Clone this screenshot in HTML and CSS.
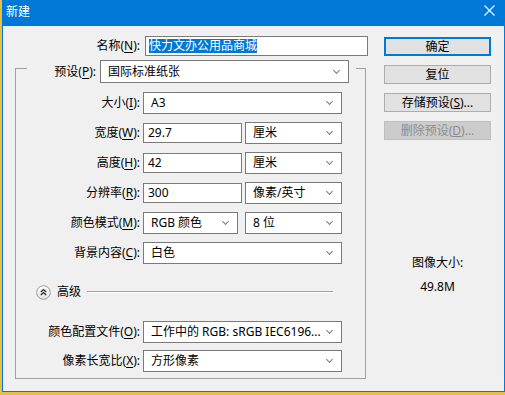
FILE: index.html
```html
<!DOCTYPE html>
<html lang="zh-CN">
<head>
    <meta charset="UTF-8">
    <title>新建</title>
    <link rel="stylesheet" href="styles.css">
</head>
<body>

    <div class="window">
        <div class="titlebar">
            <span class="title">新建</span>
            <svg class="close" width="11" height="11" viewBox="0 0 11 11">
                <path d="M0.5 0.5 L10.5 10.5 M10.5 0.5 L0.5 10.5" stroke="#fff" stroke-width="1.1" fill="none"/>
            </svg>
        </div>

        <div class="content">
            <div class="form">
                <div class="name-row">
                    <label class="lbl name-lbl">名称(<u>N</u>):</label>
                    <div class="field name-field"><span class="sel">快力文办公用品商城</span></div>
                </div>

                <div class="group">
                    <div class="group-head">
                        <div class="edge edge-l"></div>
                        <label class="lbl head-lbl">预设(<u>P</u>):</label>
                        <div class="field select preset">国际标准纸张<i class="chev"></i></div>
                        <div class="edge edge-r"></div>
                    </div>

                    <div class="group-body">
                        <div class="rows">
                            <label class="lbl">大小(<u>I</u>):</label>
                            <div class="cells">
                                <div class="field select w-full">A3<i class="chev"></i></div>
                            </div>

                            <label class="lbl">宽度(<u>W</u>):</label>
                            <div class="cells">
                                <div class="field input">29.7</div>
                                <div class="field select w-unit">厘米<i class="chev"></i></div>
                            </div>

                            <label class="lbl">高度(<u>H</u>):</label>
                            <div class="cells">
                                <div class="field input">42</div>
                                <div class="field select w-unit">厘米<i class="chev"></i></div>
                            </div>

                            <label class="lbl">分辨率(<u>R</u>):</label>
                            <div class="cells">
                                <div class="field input">300</div>
                                <div class="field select w-unit">像素/英寸<i class="chev"></i></div>
                            </div>

                            <label class="lbl">颜色模式(<u>M</u>):</label>
                            <div class="cells">
                                <div class="field select w-mode">RGB 颜色<i class="chev"></i></div>
                                <div class="field select w-bits">8 位<i class="chev"></i></div>
                            </div>

                            <label class="lbl">背景内容(<u>C</u>):</label>
                            <div class="cells">
                                <div class="field select w-full">白色<i class="chev"></i></div>
                            </div>
                        </div>

                        <div class="advanced">
                            <svg class="adv-icon" width="15" height="15" viewBox="0 0 15 15">
                                <defs>
                                    <linearGradient id="g" x1="0" y1="0" x2="0" y2="1">
                                        <stop offset="0" stop-color="#ffffff"/>
                                        <stop offset="1" stop-color="#e2e2e2"/>
                                    </linearGradient>
                                </defs>
                                <circle cx="7.5" cy="7.5" r="6.8" fill="url(#g)" stroke="#9a9a9a"/>
                                <path d="M4.8 7 L7.5 4.5 L10.2 7 M4.8 10 L7.5 7.5 L10.2 10" stroke="#222" stroke-width="1.2" fill="none"/>
                            </svg>
                            <span class="adv-text">高级</span>
                            <div class="adv-line"></div>
                        </div>

                        <div class="rows rows-adv">
                            <label class="lbl">颜色配置文件(<u>O</u>):</label>
                            <div class="cells">
                                <div class="field select w-full">工作中的 RGB: sRGB IEC6196...<i class="chev"></i></div>
                            </div>

                            <label class="lbl">像素长宽比(<u>X</u>):</label>
                            <div class="cells">
                                <div class="field select w-full">方形像素<i class="chev"></i></div>
                            </div>
                        </div>
                    </div>
                </div>
            </div>

            <div class="side">
                <button class="btn btn-default">确定</button>
                <button class="btn">复位</button>
                <button class="btn">存储预设(<u>S</u>)...</button>
                <button class="btn" disabled>删除预设(<u>D</u>)...</button>

                <div class="size-label">图像大小:</div>
                <div class="size-value">49.8M</div>
            </div>
        </div>
    </div>

</body>
</html>
```

FILE: styles.css
```css
body {
    margin: 0;
    background: #e8bf45;
    font-family: "Noto Sans", "Noto Sans CJK SC", sans-serif;
    font-size: 12px;
    color: #000;
    width: 505px;
    height: 395px;
    overflow: hidden;
}

.window {
    margin-left: 2px;
    width: 501px;
    height: 391px;
    border: 1px solid #0078d7;
    border-top: none;
    background: #f0f0f0;
}

.titlebar {
    height: 26px;
    background: #0078d7;
    display: flex;
    align-items: center;
    justify-content: space-between;
    padding: 0 9px 2px 3px;
    box-sizing: border-box;
    color: #fff;
}

.title {
    font-size: 12px;
    line-height: 14px;
}

.close {
    display: block;
    margin-top: -3px;
}

.content {
    display: flex;
}

.form {
    width: 367px;
}

.lbl {
    text-align: right;
    white-space: nowrap;
    line-height: 16px;
}

.lbl u {
    text-decoration: underline;
    text-underline-offset: 2px;
}

.field {
    box-sizing: border-box;
    background: #fff;
    border: 1px solid #7a7a7a;
    display: flex;
    align-items: center;
    white-space: nowrap;
    overflow: hidden;
    line-height: 16px;
}

.name-row {
    display: flex;
    align-items: center;
    margin-top: 10px;
}

.name-lbl {
    width: 137px;
    margin-right: 5px;
}

.name-field {
    width: 223px;
    height: 20px;
    padding-left: 3px;
}

.sel {
    background: #0078d7;
    color: #fff;
    line-height: 14px;
}

.group {
    margin: 4px 0 0 12px;
    width: 351px;
}

.group-head {
    display: flex;
    height: 23px;
}

.edge {
    margin-top: 8px;
    height: 15px;
    border-top: 1px solid #a0a0a0;
    box-sizing: border-box;
}

.edge-l {
    width: 12px;
    border-left: 1px solid #a0a0a0;
}

.edge-r {
    flex: 1;
    margin-left: 7px;
    border-right: 1px solid #a0a0a0;
}

.head-lbl {
    width: 69px;
    margin-right: 4px;
    align-self: center;
}

.select {
    padding-left: 7px;
    justify-content: space-between;
    padding-right: 5px;
    height: 22px;
}

.preset {
    width: 249px;
    height: 23px;
    font-size: 12px;
}

/* little "v" arrow of the combo boxes */
.chev {
    width: 4px;
    height: 4px;
    border-right: 1px solid #7c7c7c;
    border-bottom: 1px solid #7c7c7c;
    transform: rotate(45deg);
    margin: -3px 4px 0 0;
}

.group-body {
    border: 1px solid #a0a0a0;
    border-top: none;
    padding: 9px 0 6px 0;
}

.rows {
    display: grid;
    grid-template-columns: 124px 199px;
    column-gap: 3px;
    row-gap: 8px;
    align-items: center;
}

.cells {
    display: flex;
    align-items: center;
    gap: 3px;
    height: 22px;
}

.input {
    width: 99px;
    height: 20px;
    padding-left: 4px;
}

.w-full {
    width: 199px;
}

.w-unit {
    width: 97px;
}

.w-mode {
    width: 95px;
}

.w-bits {
    width: 97px;
    margin-left: 4px;
}

.advanced {
    display: flex;
    align-items: center;
    height: 16px;
    margin: 20px 32px 0 20px;
}

.adv-icon {
    display: block;
}

.adv-text {
    margin-left: 6px;
    line-height: 16px;
}

.adv-line {
    flex: 1;
    margin-left: 6px;
    border-top: 1px solid #a0a0a0;
    border-bottom: 1px solid #fff;
}

.rows-adv {
    margin-top: 21px;
    row-gap: 7px;
}

.side {
    margin-left: 14px;
    width: 107px;
    padding-top: 11px;
    display: flex;
    flex-direction: column;
    align-items: stretch;
}

.btn {
    height: 19px;
    margin-bottom: 9px;
    padding: 0;
    font-family: inherit;
    font-size: 12px;
    line-height: 14px;
    color: #000;
    background: #e1e1e1;
    border: 1px solid #adadad;
}

.btn-default {
    border: 2px solid #0078d7;
}

.btn:disabled {
    background: #cccccc;
    border-color: #bfbfbf;
    color: #8c8c8c;
}

.size-label {
    margin-top: 106px;
    text-align: center;
    line-height: 16px;
}

.size-value {
    margin-top: 8px;
    text-align: center;
    line-height: 16px;
}
```
